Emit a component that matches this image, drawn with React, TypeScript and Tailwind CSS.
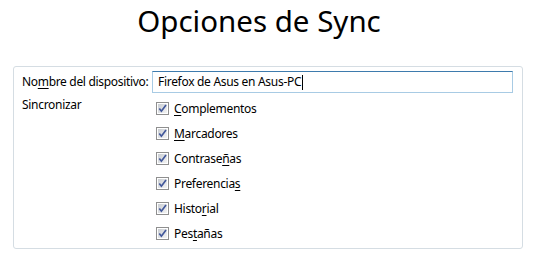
import React from "react";

const font = { fontFamily: '"Noto Sans", "Open Sans", sans-serif' };

function U({ children }: { children: React.ReactNode }) {
  return <span className="underline underline-offset-2 decoration-1">{children}</span>;
}

function Check() {
  return (
    <span className="flex h-[13px] w-[13px] shrink-0 items-center justify-center border border-[#8f8f8f] bg-white">
      <span className="flex h-[9px] w-[9px] items-center justify-center bg-gradient-to-br from-[#c9cdd2] to-[#f4f4f4]">
        <svg width="9" height="9" viewBox="0 0 9 9">
          <path d="M1.3 4.4 L3.4 7.2 L8 1" fill="none" stroke="#41579a" strokeWidth="1.7" />
        </svg>
      </span>
    </span>
  );
}

const items: React.ReactNode[] = [
  <><U>C</U>omplementos</>,
  <><U>M</U>arcadores</>,
  <>Contrase<U>ñ</U>as</>,
  <>Preferencia<U>s</U></>,
  <>Histo<U>r</U>ial</>,
  <>Pes<U>t</U>añas</>,
];

export default function App() {
  return (
    <div className="h-[260px] w-[542px] bg-white text-black" style={font}>
      <div className="flex h-[66px] justify-center pr-[24px]">
        <h1 className="text-[29.5px] leading-[42px] font-normal">Opciones de Sync</h1>
      </div>
      <div className="ml-[13px] mr-[19px] h-[183px] rounded-[3px] border border-[#d5dde3] pl-[8px] pr-[9px] pt-[4px]">
        <div className="flex h-[22px] items-center">
          <label className="w-[130px] text-[12px] leading-none tracking-[-0.32px]">
            No<U>m</U>bre del dispositivo:
          </label>
          <div className="flex h-[22px] flex-1 items-center border border-[#a8cbe4] border-t-[#3e7bad] pl-[5px] text-[12px] tracking-[-0.3px]">
            Firefox de Asus en Asus-PC<span className="ml-[1px] inline-block h-[15px] w-[1px] bg-black" />
          </div>
        </div>
        <div className="mt-[3px] flex">
          <div className="w-[130px] pt-[1px] text-[12px] leading-[16px] tracking-[-0.3px]">Sincronizar</div>
          <div className="flex flex-col pl-[4px]">
            {items.map((it, i) => (
              <div key={i} className="flex h-[25px] items-center gap-[5px] text-[12px] tracking-[-0.3px]">
                <Check />
                <span className="leading-none">{it}</span>
              </div>
            ))}
          </div>
        </div>
      </div>
    </div>
  );
}
